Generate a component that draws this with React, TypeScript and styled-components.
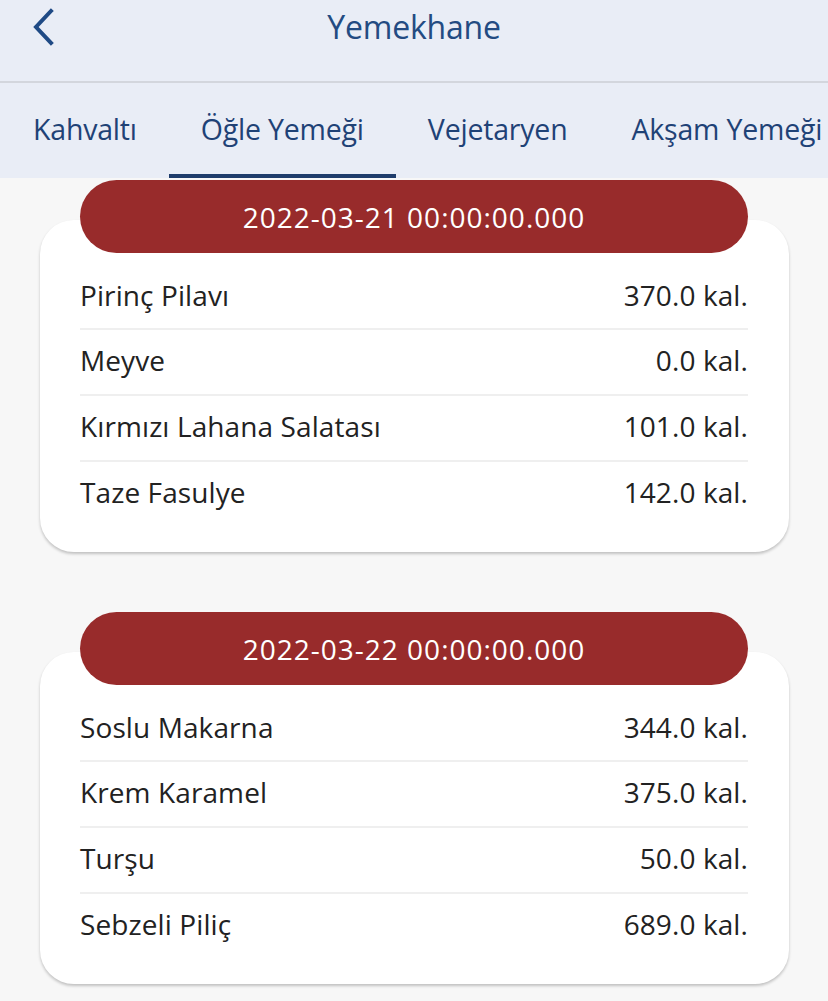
import React from "react";
import styled, { createGlobalStyle } from "styled-components";

const GlobalStyle = createGlobalStyle`
  html, body {
    margin: 0;
    padding: 0;
    background: #f7f7f7;
    font-family: "Open Sans", "Noto Sans", sans-serif;
  }
`;

type Meal = { name: string; cal: string };
type Day = { date: string; meals: Meal[] };

const days: Day[] = [
  {
    date: "2022-03-21 00:00:00.000",
    meals: [
      { name: "Pirinç Pilavı", cal: "370.0 kal." },
      { name: "Meyve", cal: "0.0 kal." },
      { name: "Kırmızı Lahana Salatası", cal: "101.0 kal." },
      { name: "Taze Fasulye", cal: "142.0 kal." },
    ],
  },
  {
    date: "2022-03-22 00:00:00.000",
    meals: [
      { name: "Soslu Makarna", cal: "344.0 kal." },
      { name: "Krem Karamel", cal: "375.0 kal." },
      { name: "Turşu", cal: "50.0 kal." },
      { name: "Sebzeli Piliç", cal: "689.0 kal." },
    ],
  },
];

const tabs = ["Kahvaltı", "Öğle Yemeği", "Vejetaryen", "Akşam Yemeği"];

const App = () => {
  const [active, setActive] = React.useState(1);

  return (
    <Page>
      <GlobalStyle />
      <Header>
        <BackButton aria-label="Geri">
          <svg width="24" height="38" viewBox="0 0 24 38" fill="none">
            <path
              d="M20 3L5 19L20 35"
              stroke="#1f4a85"
              strokeWidth="4"
              strokeLinecap="square"
            />
          </svg>
        </BackButton>
        <Title>Yemekhane</Title>
      </Header>
      <TabBar>
        {tabs.map((t, i) => (
          <Tab key={t} $active={i === active} onClick={() => setActive(i)}>
            {t}
          </Tab>
        ))}
      </TabBar>
      <List>
        {days.map((d) => (
          <Section key={d.date}>
            <DatePill>{d.date}</DatePill>
            <Card>
              {d.meals.map((m) => (
                <Row key={m.name}>
                  <span>{m.name}</span>
                  <span>{m.cal}</span>
                </Row>
              ))}
            </Card>
          </Section>
        ))}
      </List>
    </Page>
  );
};

const Page = styled.div`
  width: 828px;
  min-height: 1001px;
  background: #f7f7f7;
  overflow: hidden;
`;

const Header = styled.header`
  height: 81px;
  background: #e9edf6;
  border-bottom: 2px solid #d3d6dd;
  position: relative;
  display: flex;
  justify-content: center;
  align-items: flex-start;
`;

const BackButton = styled.button`
  position: absolute;
  left: 31px;
  top: 8px;
  border: none;
  background: none;
  padding: 0;
  cursor: pointer;
`;

const Title = styled.h1`
  margin: 5px 0 0;
  font-size: 32px;
  font-weight: 400;
  color: #234b82;
  letter-spacing: -0.2px;
`;

const TabBar = styled.nav`
  height: 95px;
  background: #e9edf6;
  display: flex;
  align-items: stretch;
  padding-left: 1px;
  white-space: nowrap;
`;

const Tab = styled.div<{ $active: boolean }>`
  padding: 0 32px;
  display: flex;
  align-items: center;
  font-size: 28.5px;
  color: #1f4276;
  letter-spacing: -0.2px;
  border-bottom: 4px solid ${(p) => (p.$active ? "#1e3c6b" : "transparent")};
  cursor: pointer;
`;

const List = styled.div`
  display: flex;
  flex-direction: column;
  gap: 60px;
  padding: 2px 39px 16px 40px;
`;

const Section = styled.section`
  display: flex;
  flex-direction: column;
`;

const DatePill = styled.div`
  position: relative;
  z-index: 1;
  margin: 0 41px 0 40px;
  height: 73px;
  border-radius: 37px;
  background: #982b2b;
  color: #fff;
  font-size: 28px;
  display: flex;
  align-items: center;
  justify-content: center;
  letter-spacing: 1px;
`;

const Card = styled.div`
  margin-top: -33px;
  background: #fff;
  border-radius: 34px;
  box-shadow: 0 2px 3px rgba(0, 0, 0, 0.22);
  padding: 42px 41px 26px 40px;
`;

const Row = styled.div`
  box-sizing: border-box;
  height: 66px;
  display: flex;
  justify-content: space-between;
  align-items: center;
  font-size: 28px;
  color: #222;
  letter-spacing: 0.1px;
  & + & {
    border-top: 2px solid #efefef;
    padding-bottom: 4px;
  }
`;

export default App;
